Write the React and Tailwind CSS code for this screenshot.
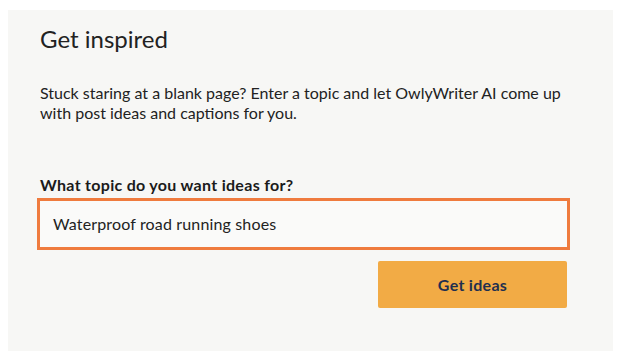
export default function App() {
  return (
    <div className="w-[620px] h-[356px] bg-white pt-[10px] pl-[8px]" style={{ fontFamily: 'Lato, "Open Sans", sans-serif' }}>
      <div className="w-[605px] h-[341px] bg-[#f7f7f5] pl-[32px] pt-[14px] text-[#222]">
        <h1 className="text-[24px] leading-[30px] font-normal">Get inspired</h1>
        <p className="mt-[29px] text-[16px] leading-[20px] w-[540px]">
          Stuck staring at a blank page? Enter a topic and let OwlyWriter AI come up with post ideas and captions for you.
        </p>
        <div className="mt-[52px] w-[533px] -ml-[3px]">
          <label className="block pl-[3px] text-[16px] leading-[20px] font-bold text-[#1b1b1b] tracking-[0.3px]">What topic do you want ideas for?</label>
          <div className="mt-[3px] h-[52px] border-[3px] border-[#ef7b3e] bg-[#fafaf9] flex items-center pl-[13px] text-[16px] tracking-[0.15px]">
            Waterproof road running shoes
          </div>
          <div className="flex justify-end pr-[3px] mt-[11px]">
            <button className="w-[189px] h-[47px] bg-[#f2ab45] rounded-[2px] text-[#1f2f4f] font-bold text-[16px] tracking-[0.3px]">
              Get ideas
            </button>
          </div>
        </div>
      </div>
    </div>
  )
}
